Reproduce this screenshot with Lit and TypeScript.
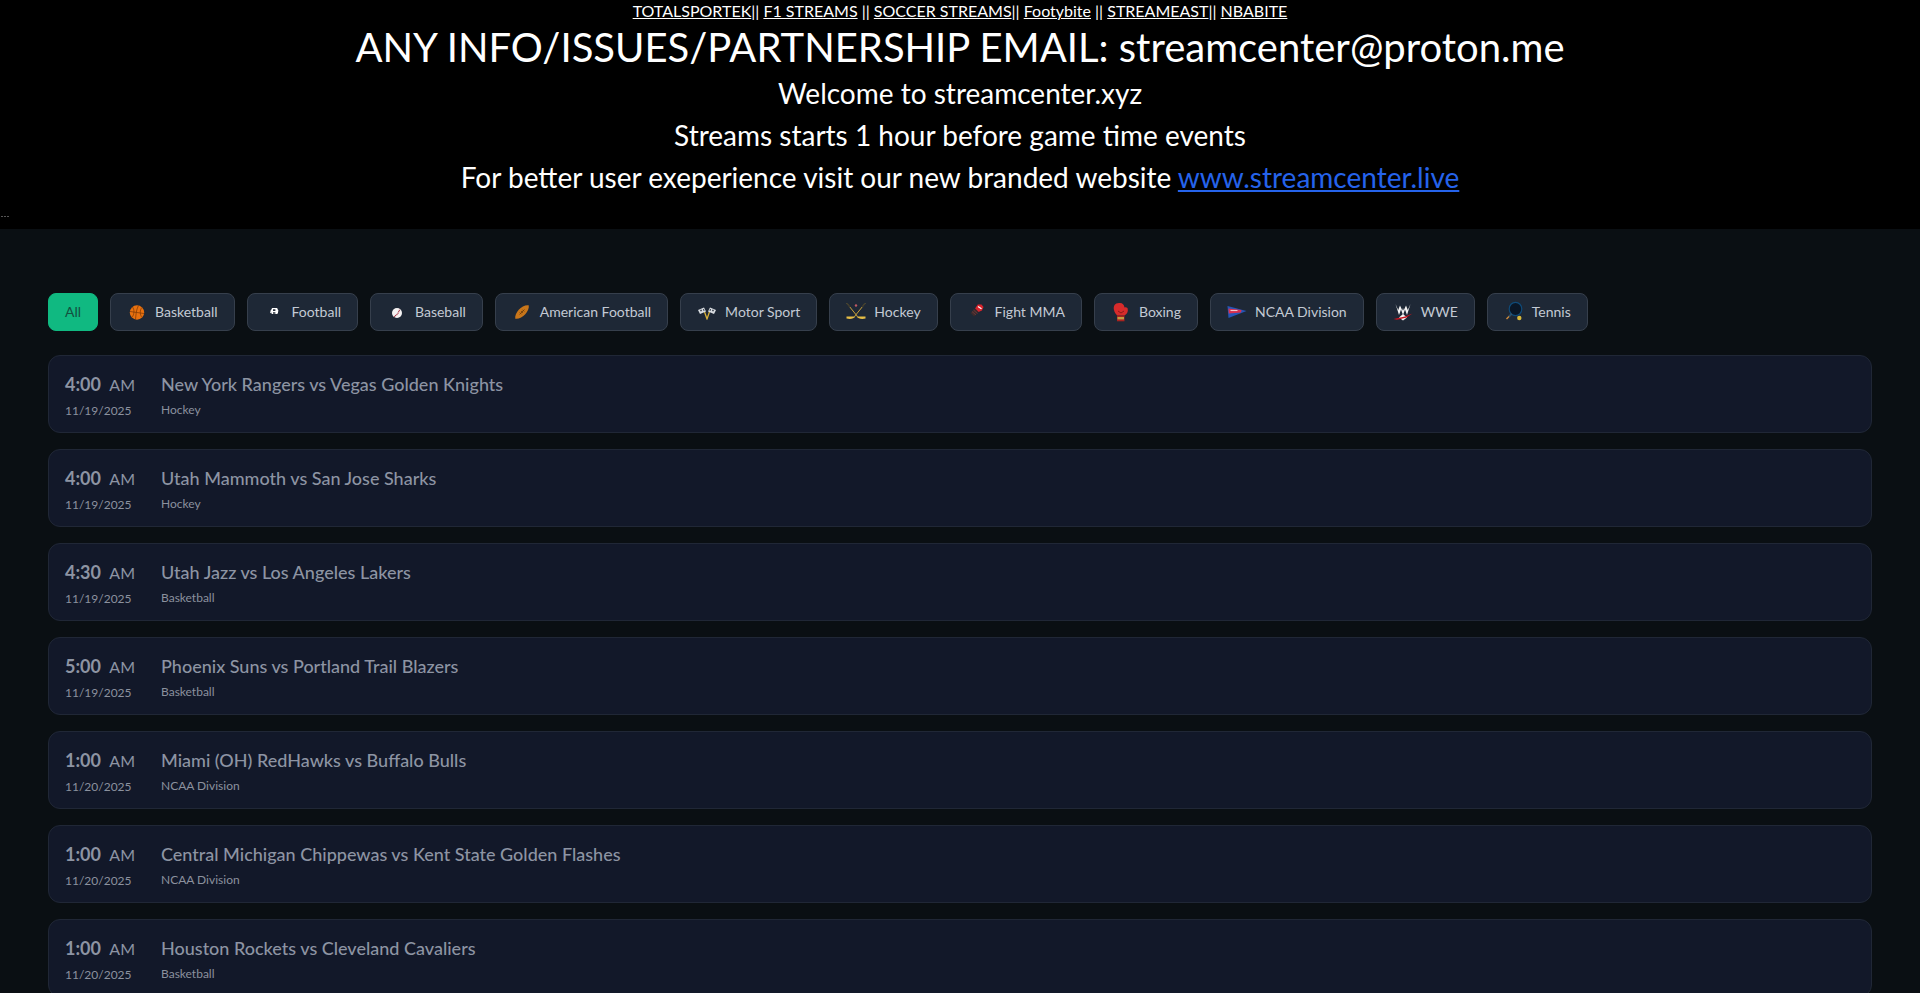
import { LitElement, html, css, svg } from "lit";
import { customElement } from "lit/decorators.js";

const icons: Record<string, unknown> = {
  Basketball: svg`<circle cx="10" cy="10.5" r="7.2" fill="#e8710f"/><g fill="none" stroke="#7a3605" stroke-width=".7"><path d="M3 9.5 17 11.5"/><path d="M11.5 3.5C9 8 9 13 8.5 17.5"/><path d="M5.5 5C7.5 7.5 7.5 12 5 15.5"/><path d="M15 5.5C12.500 8 13 13 15 15.500"/></g>`,
  Football: svg`<path d="M7.500 7.500h5l1.300 2.800-1 3.200H7.200l-1-3.200z" fill="#fff" transform="translate(.6 -1.500)"/><path d="M9 7.300h2.400v1.600H9zM9 10.200h2.400v1.600H9z" fill="#28303c"/><path d="M7.300 8.300 6.800 11.200M13 8.300l.5 2.900" stroke="#fff" stroke-width="1.200"/>`,
  Baseball: svg`<circle cx="10" cy="11" r="5" fill="#f4f2f2"/><path d="M7 14.700C9.500 13.500 12 10.500 12.700 7" fill="none" stroke="#a3283a" stroke-width="1.300" stroke-dasharray="1 .6"/>`,
  "American Football": svg`<g transform="rotate(-45 10 10)"><path d="M.5 10C4 4.800 16 4.800 19.500 10 16 15.200 4 15.200.5 10z" fill="#c9761a"/><path d="M6.500 10h7M8 8.800v2.400M10 8.800v2.400M12 8.800v2.400" stroke="#6e3d0a" stroke-width=".8"/></g>`,
  "Motor Sport": svg`<path d="M6.500 7 10.200 17.500M13.500 7 9.800 17.500" stroke="#d8b13a" stroke-width="1.300"/><path d="M1 8 7 5.500 9 9.500 3 12z" fill="#d9dde2"/><path d="M19 8 13 5.500 11 9.500 17 12z" fill="#d9dde2"/><path d="M3 8 4.500 7.500 5 9 3.700 9.500zM6 7 7 7 7.600 8.400 6.500 8.900zM17 8 15.500 7.500 15 9 16.300 9.500zM14 7 13 7 12.400 8.400 13.500 8.900z" fill="#333c48"/>`,
  Hockey: svg`<path d="M1 1.500 11.500 14.500M19 1.500 8.500 14.500" stroke="#c9a23a" stroke-width="1"/><path d="M10.500 14.500H19.500V16.500C16 17.500 12 16.800 10.500 14.500zM9.500 14.500H.5V16.500C4 17.500 8 16.800 9.500 14.500z" fill="#e6bd45"/><path d="M1 1.500 4 5M19 1.500 16 5" stroke="#3d3a2d" stroke-width="1.300"/><circle cx="10" cy="3.500" r="1.200" fill="#bd5963"/>`,
  "Fight MMA": svg`<path d="M8 6.500 10.800 2.500 14.500 2.500 16.500 5 15 8.500 11.500 10z" fill="#d8232c"/><path d="M11 4.500 14.500 6.700" stroke="#fff" stroke-width="1.300"/><path d="M8 6.500 11.500 10 7 14.500 3.500 11z" fill="#3c2a2c"/><path d="M5 9.500 9 13M6.500 8 10.500 11.500" stroke="#7d3c3c" stroke-width=".7"/>`,
  Boxing: svg`<path d="M9 1C4 .5 2 4 3 8c.5 2.500 2 4 3 5.500h7.500C16.500 11.500 17.500 9 16.500 6 15.500 5 14 5 13.500 5.500 13 2.500 11.500 1.200 9 1z" fill="#d72b2b"/><path d="M6 13.500h7.500v5.800H6z" fill="#a9231f"/><path d="M6.500 15h6.500v2.400H6.500z" fill="#c29a41"/><path d="M7 9 10 11 13 9" fill="none" stroke="#8c1a1a"/>`,
  "NCAA Division": svg`<path d="M.5 4 19.500 9 1.500 16z" fill="#2656b8"/><path d="M1.500 6.500 14.500 8 14 10.500 1.800 11.500z" fill="#d9304f"/><path d="M3.500 8.500h7" stroke="#f2c7d0" stroke-width="1.100"/>`,
  WWE: svg`<path d="M2.500 2 6 13 8 7.500 10 13 12 7.500 14 13 17.500 2 14.800 8 13 3.500 10.700 8.500 10 6 9.300 8.500 7 3.500 5.200 8z" fill="#f4f4f4"/><path d="M6 15.500 10 18.500 14 15.500 10 12z" fill="#f4f4f4"/><path d="M.5 17 12 14.500 19.500 11.500 13 15.800 4 17.800z" fill="#c8141f"/>`,
  Tennis: svg`<ellipse cx="11.500" cy="7" rx="6.300" ry="6.700" fill="#0a1626" stroke="#0f4a78" stroke-width="1.200"/><path d="M7.500 12 2.500 17" stroke="#d08a3c" stroke-width="1.500"/><path d="M7.500 12 5 14.500" stroke="#0f4a78" stroke-width="1.500"/><circle cx="15.300" cy="16" r="2.200" fill="#d9b93a"/>`,
};

const chips = Object.keys(icons);

const games = [
  ["4:00", "11/19/2025", "New York Rangers vs Vegas Golden Knights", "Hockey"],
  ["4:00", "11/19/2025", "Utah Mammoth vs San Jose Sharks", "Hockey"],
  ["4:30", "11/19/2025", "Utah Jazz vs Los Angeles Lakers", "Basketball"],
  ["5:00", "11/19/2025", "Phoenix Suns vs Portland Trail Blazers", "Basketball"],
  ["1:00", "11/20/2025", "Miami (OH) RedHawks vs Buffalo Bulls", "NCAA Division"],
  ["1:00", "11/20/2025", "Central Michigan Chippewas vs Kent State Golden Flashes", "NCAA Division"],
  ["1:00", "11/20/2025", "Houston Rockets vs Cleveland Cavaliers", "Basketball"],
  ["1:30", "11/20/2025", "Toronto Raptors vs Philadelphia 76ers", "Basketball"],
];

@customElement("app-root")
export class AppRoot extends LitElement {
  static styles = css`
    :host {
      display: block;
      height: 100vh;
      overflow: hidden;
      background: #0a0f13;
      font-family: Lato, sans-serif;
    }
    a { color: inherit; }
    .banner {
      background: #000;
      color: #fff;
      text-align: center;
      height: 229px;
      position: relative;
    }
    .links { font-size: 16px; line-height: 22px; }
    .email { font-size: 40px; line-height: 50px; font-weight: 400; margin: 0; }
    .line { font-size: 28px; line-height: 42px; margin: 0; }
    .line a { color: #2563eb; }
    .tiny {
      position: absolute;
      left: 1px;
      top: 216px;
      width: 9px;
      height: 1px;
      background: repeating-linear-gradient(90deg, #555 0 2px, #000 2px 3px);
    }
    main { padding: 64px 48px 0; }
    .chips { display: flex; gap: 12px; margin-bottom: 24px; }
    .chip {
      display: flex;
      align-items: center;
      gap: 8px;
      padding: 8px 16px;
      font-size: 14px;
      line-height: 20px;
      color: #c3cad4;
      background: #1e2836;
      border: 1px solid #363f4c;
      border-radius: 8px;
    }
    .chip.active {
      background: #10b981;
      border-color: #10b981;
      color: #14503f;
    }
    .chip svg { width: 20px; height: 20px; flex: none; overflow: visible; }
    .list { display: flex; flex-direction: column; gap: 16px; }
    .card {
      display: flex;
      gap: 16px;
      height: 78px;
      box-sizing: border-box;
      padding: 14px 16px;
      background: #121829;
      border: 1px solid #202736;
      border-radius: 12px;
    }
    .when { width: 80px; flex: none; }
    .time { font-size: 18px; line-height: 28px; font-weight: 700; color: #8d94a3; white-space: nowrap; }
    .ampm { font-size: 16px; font-weight: 400; margin-left: 4px; }
    .small { font-size: 12px; line-height: 16px; margin-top: 4px; color: #8b919e; }
    .title { font-size: 18px; line-height: 28px; font-weight: 500; color: #8d94a3; }
  `;

  render() {
    return html`
      <div class="banner">
        <div class="links"><a href="#">TOTALSPORTEK</a>|| <a href="#">F1 STREAMS</a> || <a href="#">SOCCER STREAMS</a>|| <a href="#">Footybite</a> || <a href="#">STREAMEAST</a>|| <a href="#">NBABITE</a></div>
        <h1 class="email">ANY INFO/ISSUES/PARTNERSHIP EMAIL: streamcenter@proton.me</h1>
        <p class="line">Welcome to streamcenter.xyz</p>
        <p class="line">Streams starts 1 hour before game time events</p>
        <p class="line">For better user exeperience visit our new branded website <a href="#">www.streamcenter.live</a></p>
        <div class="tiny"></div>
      </div>
      <main>
        <div class="chips">
          <div class="chip active">All</div>
          ${chips.map(
            (c) => html`<div class="chip"><svg viewBox="0 0 20 20">${icons[c]}</svg>${c}</div>`
          )}
        </div>
        <div class="list">
          ${games.map(
            (g) => html`<div class="card">
              <div class="when">
                <div class="time">${g[0]} <span class="ampm">AM</span></div>
                <div class="small">${g[1]}</div>
              </div>
              <div>
                <div class="title">${g[2]}</div>
                <div class="small">${g[3]}</div>
              </div>
            </div>`
          )}
        </div>
      </main>
    `;
  }
}
